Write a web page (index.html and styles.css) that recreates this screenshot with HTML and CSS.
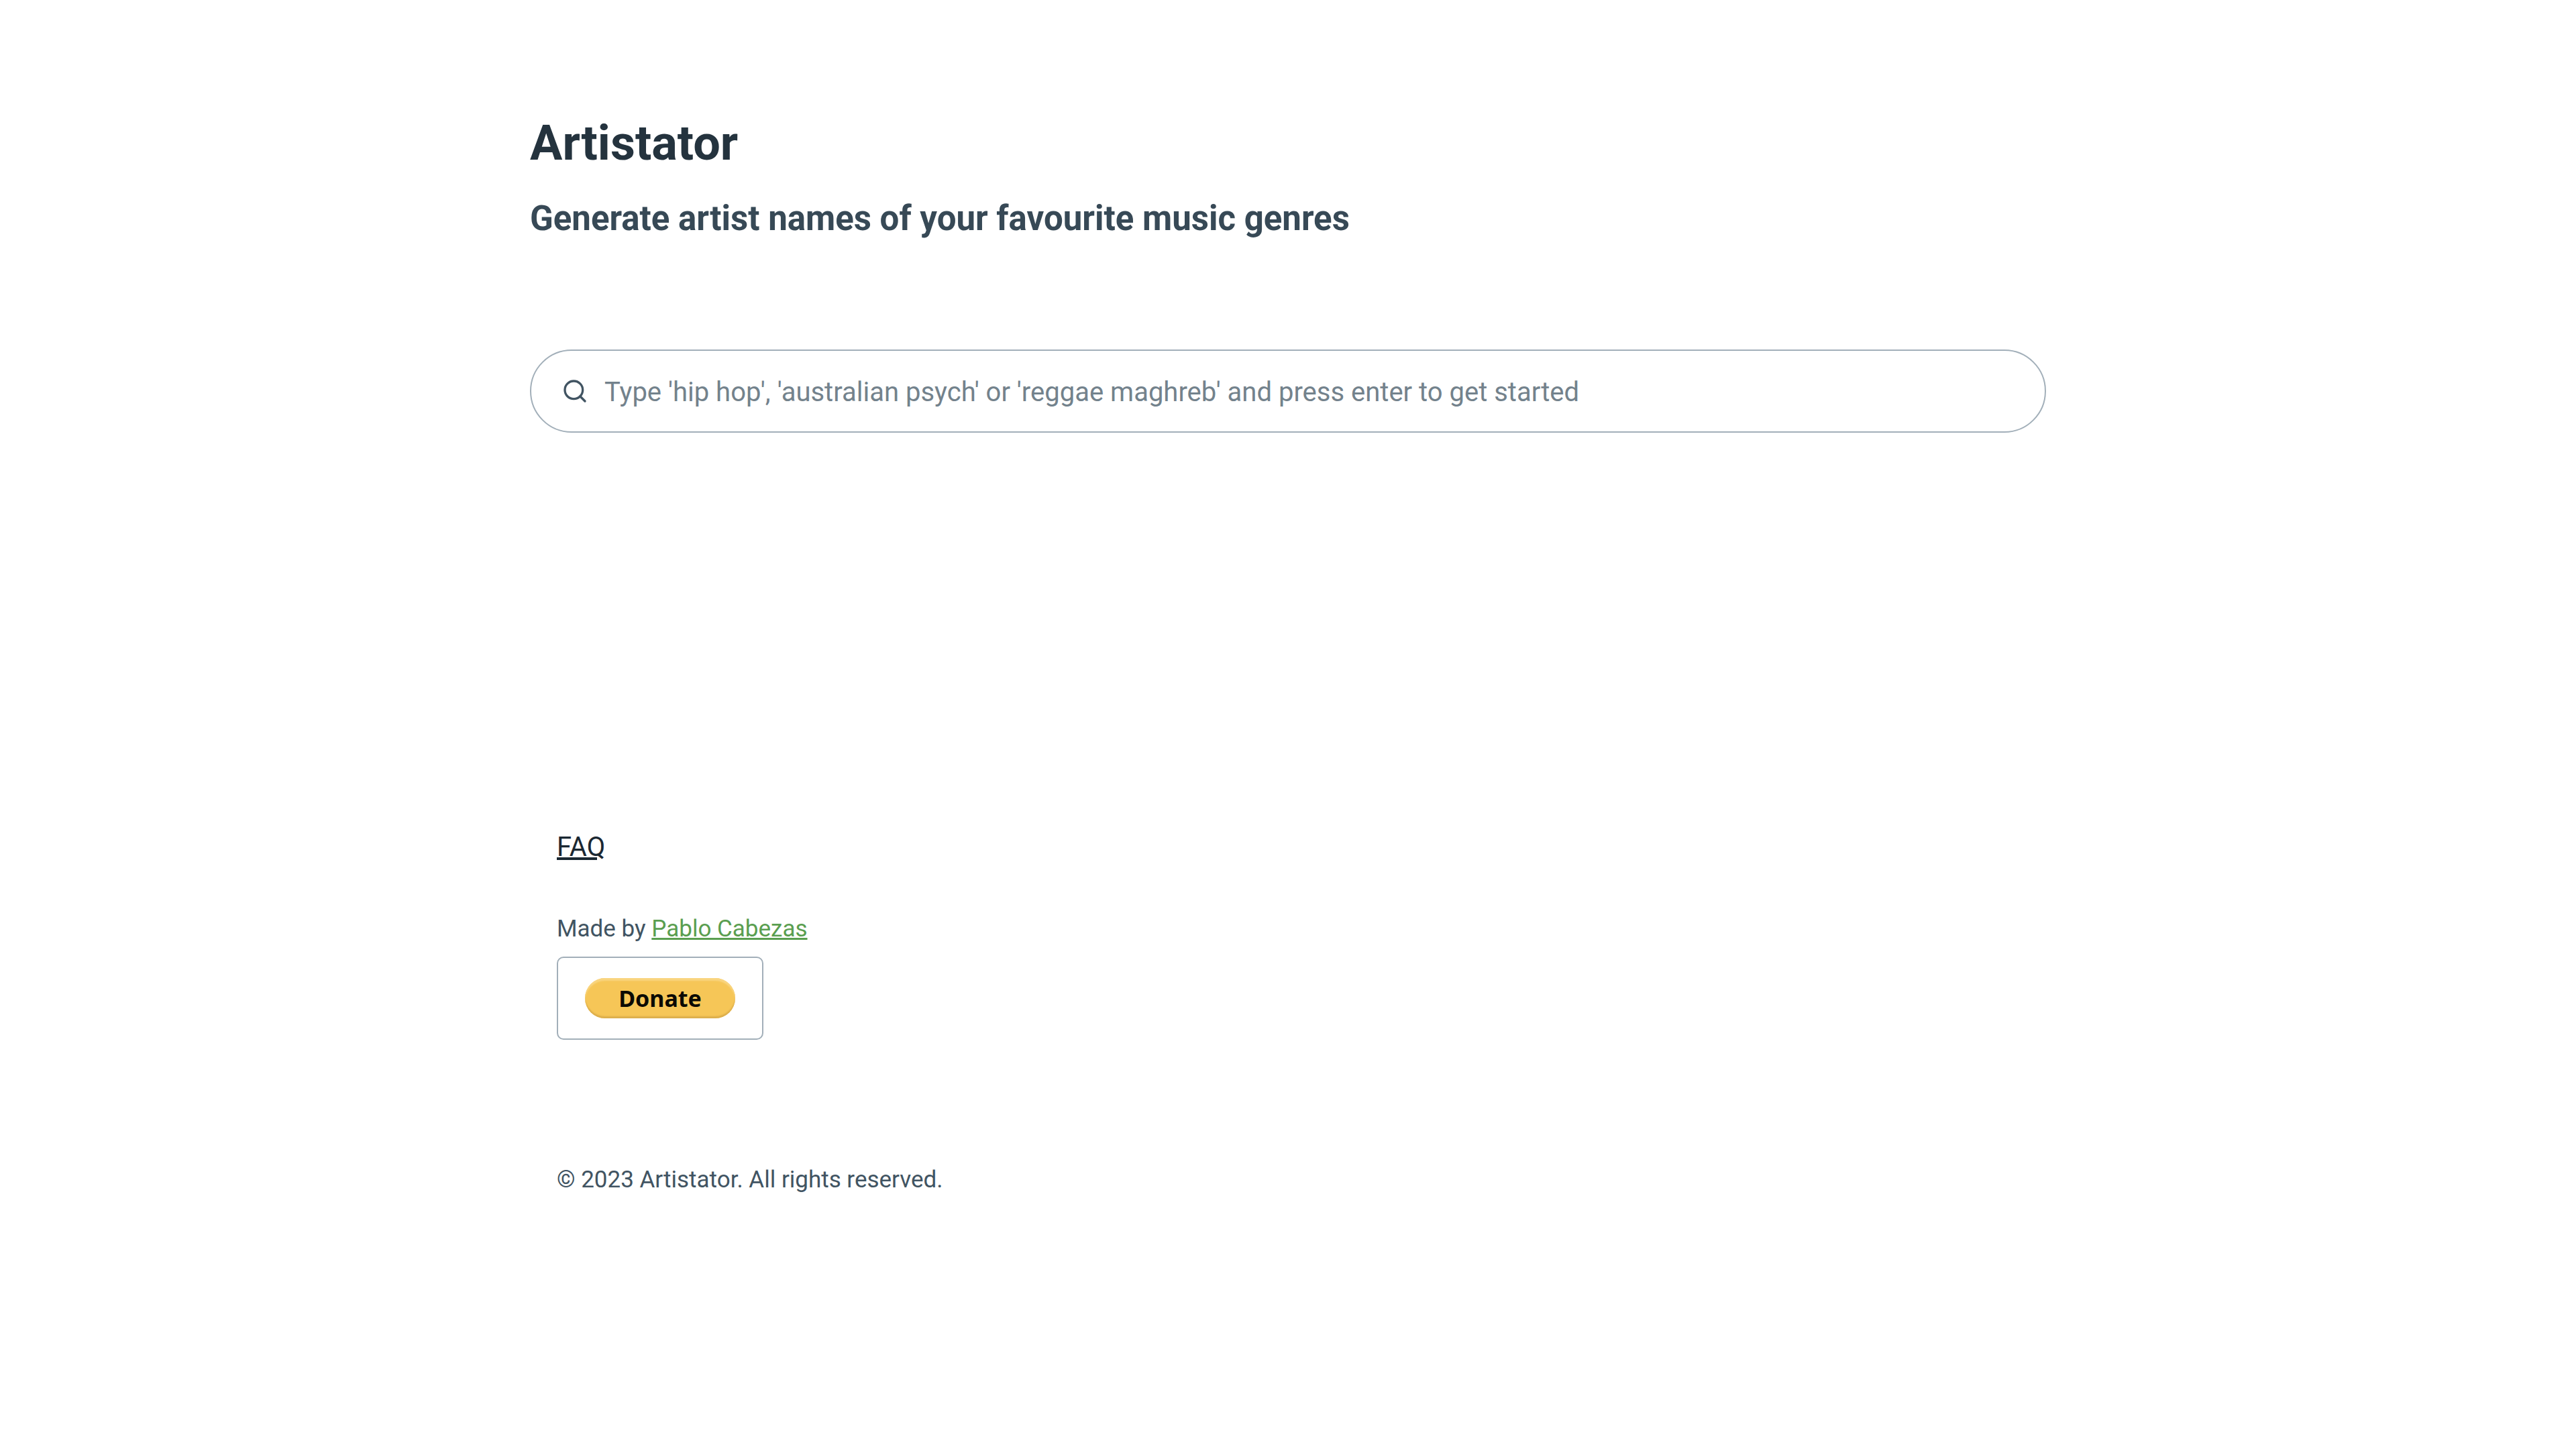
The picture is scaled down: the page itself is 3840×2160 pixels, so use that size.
FILE: index.html
```html
<!DOCTYPE html>
<html lang="en">
<head>
<meta charset="utf-8">
<meta name="viewport" content="width=device-width, initial-scale=1">
<title>Artistator</title>
<link rel="stylesheet" href="styles.css">
</head>
<body>
<main class="container">
  <header class="intro">
    <h1 class="title">Artistator</h1>
    <h2 class="tagline">Generate artist names of your favourite music genres</h2>
  </header>
  <form class="search" role="search">
    <label class="search-label" for="genre" aria-label="Music genre">
      <svg class="search-icon" viewBox="0 0 24 24" aria-hidden="true"><circle cx="11" cy="11" r="8"/><path d="M21 21l-4.35-4.35"/></svg>
    </label>
    <input class="search-input" id="genre" type="search" placeholder="Type 'hip hop', 'australian psych' or 'reggae maghreb' and press enter to get started">
  </form>
</main>
<footer class="container footer">
  <a class="faq" href="#faq">FAQ</a>
  <p class="credit">Made by <a class="author" href="#author">Pablo Cabezas</a></p>
  <form class="donate">
    <button class="donate-button" type="button"><span class="pill">Donate</span></button>
  </form>
  <p class="copyright">© 2023 Artistator. All rights reserved.</p>
</footer>
</body>
</html>
```
FILE: styles.css
```css
*, *::before, *::after { box-sizing: border-box; }

body {
  margin: 0;
  background: #fff;
  color: #415462;
  font-family: Roboto, "Liberation Sans", sans-serif;
  font-size: 40px;
  line-height: 60px;
}

h1, h2, p { margin: 0; }

.container {
  width: 100%;
  max-width: 2260px;
  margin: 0 auto;
}

.intro { padding-top: 168px; }

.title {
  color: #24333e;
  font-size: 72px;
  font-weight: 700;
  line-height: 92px;
}

.tagline {
  margin-top: 32px;
  color: #374956;
  font-size: 51px;
  font-weight: 700;
  line-height: 68px;
}

.search {
  display: flex;
  align-items: center;
  gap: 24px;
  height: 124px;
  margin-top: 161px;
  padding: 0 45px;
  border: 2px solid #a2afb9;
  border-radius: 62px;
}

.search-label { display: flex; }

.search-icon {
  width: 40px;
  height: 40px;
  fill: none;
  stroke: #415462;
  stroke-width: 2;
  stroke-linecap: round;
  stroke-linejoin: round;
}

.search-input {
  flex: 1;
  min-width: 0;
  padding: 4px 0 0;
  border: 0;
  outline: 0;
  background: none;
  color: #415462;
  font: inherit;
  appearance: none;
}

.search-input::placeholder { color: #73828c; opacity: 1; }

.footer {
  display: flex;
  flex-direction: column;
  align-items: flex-start;
  padding: 588px 40px 160px;
}

.faq {
  color: #1b2832;
  text-decoration-thickness: 4px;
}

.credit, .copyright {
  font-size: 35px;
  line-height: 52px;
}

.credit { margin-top: 66px; }

.author {
  color: #5a9e50;
  text-decoration-thickness: 3px;
}

.donate { margin-top: 15px; }

.donate-button {
  display: block;
  padding: 30px 40px;
  border: 2px solid #a2afb9;
  border-radius: 10px;
  background: none;
  cursor: pointer;
}

.pill {
  display: block;
  width: 224px;
  border-radius: 30px;
  background: #f6c657;
  box-shadow: inset 0 4px 2px #f9d580, inset 0 -3px 2px #dcae4b;
  color: #0b0a04;
  font-family: "Noto Sans", sans-serif;
  font-size: 34px;
  font-weight: 700;
  line-height: 60px;
}

.copyright { margin-top: 183px; }
```
